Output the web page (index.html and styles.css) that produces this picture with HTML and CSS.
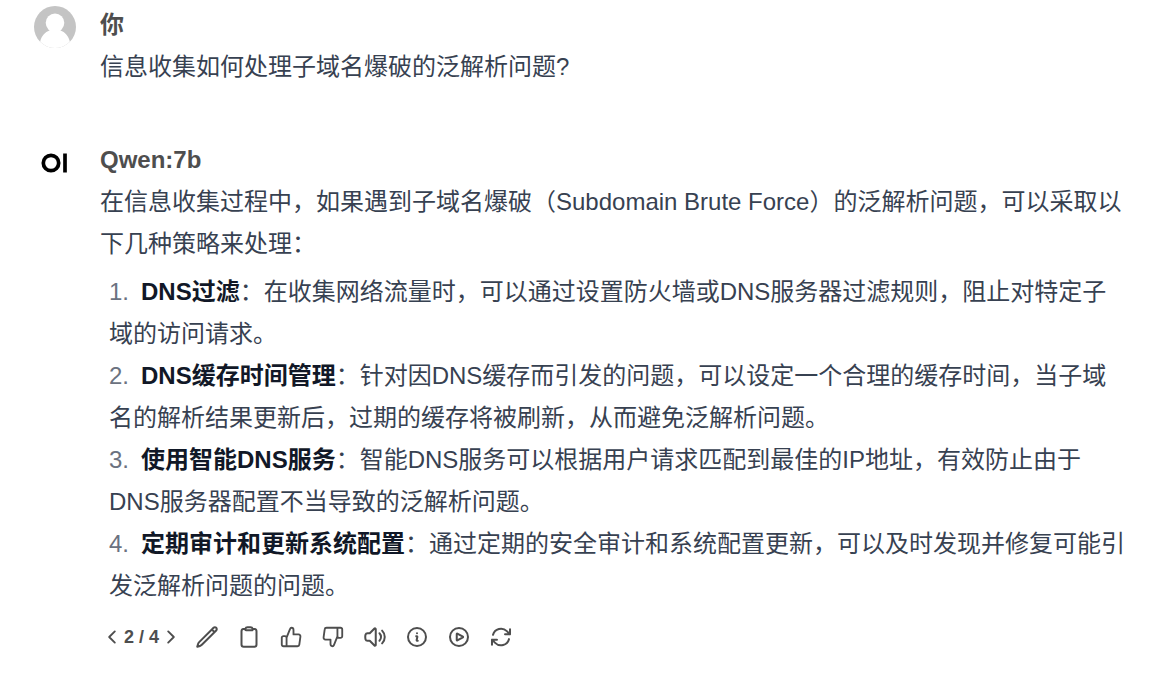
FILE: index.html
```html
<!DOCTYPE html>
<html lang="zh-CN">
<head>
<meta charset="utf-8">
<meta name="viewport" content="width=device-width, initial-scale=1">
<title>Qwen:7b</title>
<link rel="stylesheet" href="styles.css">
</head>
<body>
<main class="chat">
  <article class="message">
    <svg class="avatar" viewBox="0 0 42 42" aria-hidden="true"><defs><clipPath id="face"><circle cx="21" cy="21" r="21"/></clipPath></defs><g clip-path="url(#face)"><rect width="42" height="42" fill="#c4c4c4"/><circle cx="21" cy="16.8" r="9.3" fill="#fff"/><path d="M15.500 22v2.500C11 26 7.500 30 6.300 35L5 42h32l-1.300-7C34.500 30 31 26 26.500 24.500V22z" fill="#fff"/></g></svg>
    <div class="content">
      <h2 class="name">你</h2>
      <p class="text">信息收集如何处理子域名爆破的泛解析问题?</p>
    </div>
  </article>
  <article class="message">
    <svg class="avatar" viewBox="0 0 42 42" aria-hidden="true"><circle cx="17" cy="22" r="7.700" fill="none" stroke="#000" stroke-width="3.700"/><path d="M31 12.500v19" stroke="#000" stroke-width="3.700"/></svg>
    <div class="content">
      <h2 class="name">Qwen:7b</h2>
      <p class="text">在信息收集过程中，如果遇到子域名爆破（Subdomain Brute Force）的泛解析问题，可以采取以下几种策略来处理：</p>
      <ol class="steps">
        <li><strong>DNS过滤</strong>：在收集网络流量时，可以通过设置防火墙或DNS服务器过滤规则，阻止对特定子域的访问请求。</li>
        <li><strong>DNS缓存时间管理</strong>：针对因DNS缓存而引发的问题，可以设定一个合理的缓存时间，当子域名的解析结果更新后，过期的缓存将被刷新，从而避免泛解析问题。</li>
        <li><strong>使用智能DNS服务</strong>：智能DNS服务可以根据用户请求匹配到最佳的IP地址，有效防止由于DNS服务器配置不当导致的泛解析问题。</li>
        <li><strong>定期审计和更新系统配置</strong>：通过定期的安全审计和系统配置更新，可以及时发现并修复可能引发泛解析问题的问题。</li>
      </ol>
      <div class="actions">
        <div class="pager">
          <button class="arrow" aria-label="上一条"><svg viewBox="0 0 24 24"><path d="M15.75 19.5 8.25 12l7.5-7.5"/></svg></button>
          <span>2 / 4</span>
          <button class="arrow" aria-label="下一条"><svg viewBox="0 0 24 24"><path d="m8.25 4.5 7.5 7.5-7.5 7.5"/></svg></button>
        </div>
        <button class="action" aria-label="编辑"><svg viewBox="0 0 24 24"><path d="M16.862 4.487l1.687-1.688a1.875 1.875 0 112.652 2.652L6.832 19.82a4.5 4.5 0 01-1.897 1.13l-2.685.8.8-2.685a4.5 4.5 0 011.13-1.897L16.863 4.487zm0 0L19.5 7.125"/></svg></button>
        <button class="action" aria-label="复制"><svg viewBox="0 0 24 24"><path d="M15.666 3.888A2.25 2.25 0 0013.5 2.25h-3c-1.03 0-1.9.693-2.166 1.638m7.332 0c.055.194.084.4.084.612v0a.75.75 0 01-.75.75H9a.75.75 0 01-.75-.75v0c0-.212.03-.418.084-.612m7.332 0c.646.049 1.288.11 1.927.184 1.1.128 1.907 1.077 1.907 2.185V19.5a2.25 2.25 0 01-2.25 2.25H6.75A2.25 2.25 0 014.5 19.5V6.257c0-1.108.806-2.057 1.907-2.185a48.208 48.208 0 011.927-.184"/></svg></button>
        <button class="action" aria-label="赞"><svg viewBox="-1 -1 26 26"><path d="M7.200 22V12.600L11 3.200C11.300 2.400 11.900 2 12.600 2C13.900 2 14.700 3 14.700 4.300V9.200H20.200A2 2 0 0 1 22.200 11.500L21 20.200A2 2 0 0 1 19 22H3.800A1.800 1.800 0 0 1 2 20.200V12.900A1.800 1.800 0 0 1 3.800 11.100H5.400A1.800 1.800 0 0 1 7.200 12.900"/></svg></button>
        <button class="action" aria-label="踩"><svg viewBox="-1 -1 26 26"><g transform="rotate(180 12 12)"><path d="M7.200 22V12.600L11 3.200C11.300 2.400 11.900 2 12.600 2C13.900 2 14.700 3 14.700 4.300V9.200H20.200A2 2 0 0 1 22.200 11.500L21 20.200A2 2 0 0 1 19 22H3.800A1.800 1.800 0 0 1 2 20.200V12.900A1.800 1.800 0 0 1 3.800 11.100H5.400A1.800 1.800 0 0 1 7.200 12.900"/></g></svg></button>
        <button class="action" aria-label="朗读"><svg viewBox="0 0 24 24"><path d="M19.114 5.636a9 9 0 010 12.728M16.463 8.288a5.25 5.25 0 010 7.424M6.75 8.25l4.72-4.72a.75.75 0 011.28.53v15.88a.75.75 0 01-1.28.53l-4.72-4.72H4.51c-.88 0-1.704-.507-1.938-1.354A9.01 9.01 0 012.25 12c0-.83.112-1.633.322-2.396C2.806 8.756 3.63 8.25 4.51 8.25H6.75z"/></svg></button>
        <button class="action" aria-label="信息"><svg viewBox="0 0 24 24"><path d="M11.25 11.25l.041-.02a.75.75 0 011.063.852l-.708 2.836a.75.75 0 001.063.853l.041-.021M21 12a9 9 0 11-18 0 9 9 0 0118 0zm-9-3.75h.008v.008H12V8.25z"/></svg></button>
        <button class="action" aria-label="继续"><svg viewBox="0 0 24 24"><path d="M21 12a9 9 0 11-18 0 9 9 0 0118 0z"/><path d="M15.91 11.672a.375.375 0 010 .656l-5.603 3.113a.375.375 0 01-.557-.328V8.887c0-.286.307-.466.557-.327l5.603 3.112z"/></svg></button>
        <button class="action" aria-label="重新生成"><svg viewBox="0 0 24 24"><path d="M16.023 9.348h4.992v-.001M2.985 19.644v-4.992m0 0h4.992m-4.993 0l3.181 3.183a8.25 8.25 0 0013.803-3.7M4.031 9.865a8.25 8.25 0 0113.803-3.7l3.181 3.182m0-4.991v4.99"/></svg></button>
      </div>
    </div>
  </article>
</main>
</body>
</html>
```
FILE: styles.css
```css
* { box-sizing: border-box; }
body {
  margin: 0;
  background: #fff;
  color: #374151;
  font: 24px/42px "Liberation Sans", "Noto Sans CJK SC", sans-serif;
}
.chat {
  display: flex;
  flex-direction: column;
  gap: 51px;
  padding: 4px 30px 0 34px;
}
.message { display: flex; gap: 24px; }
.avatar { flex: none; width: 42px; height: 42px; margin-top: 2px; }
.content { flex: 1; min-width: 0; }
.name { margin: 0; color: #4e4e4e; font-size: 24px; line-height: 42px; }
.text { margin: 0; }
.steps {
  margin: 6px 0 0;
  padding: 0 0 0 9px;
  list-style: none;
  counter-reset: step;
}
.steps li { counter-increment: step; }
.steps li::before {
  content: counter(step) ".";
  display: inline-block;
  width: 32px;
  color: #6b7280;
}
.steps strong { color: #111827; }
.actions { display: flex; align-items: center; gap: 6px; margin-top: 12px; color: #4e4e4e; }
.pager { display: flex; align-items: center; gap: 3px; margin: 0 3px; font-size: 18px; line-height: 36px; font-weight: 700; }
button { display: flex; padding: 0; border: 0; background: none; color: inherit; cursor: pointer; }
.action { padding: 6px; }
svg { display: block; }
button svg { width: 24px; height: 24px; fill: none; stroke: currentColor; stroke-width: 2; stroke-linecap: round; stroke-linejoin: round; }
.arrow svg { width: 18px; height: 18px; stroke-width: 2.5; }
```
